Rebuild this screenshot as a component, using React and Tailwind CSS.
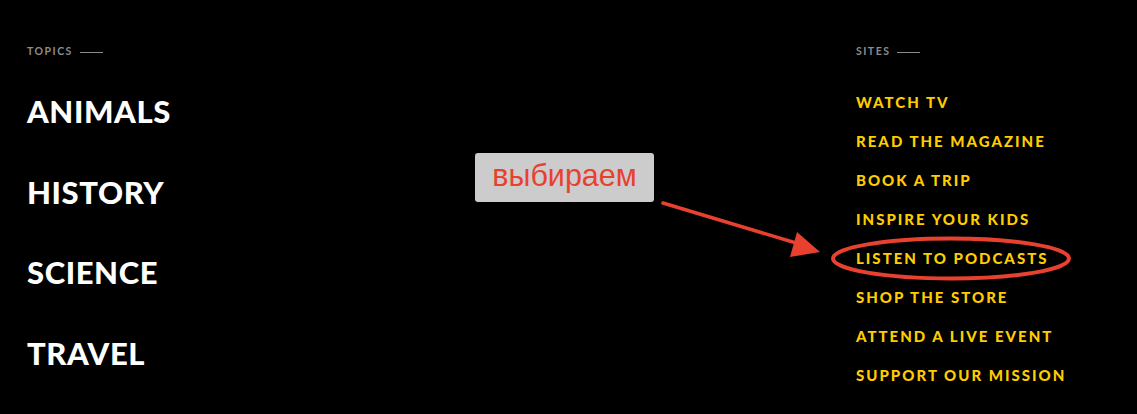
import React from "react";

const topics = ["Animals", "History", "Science", "Travel"];

const sites = [
  "Watch TV",
  "Read the Magazine",
  "Book a Trip",
  "Inspire Your Kids",
  "Listen to Podcasts",
  "Shop the Store",
  "Attend a Live Event",
  "Support Our Mission",
];

function SectionLabel({ children }) {
  return (
    <div className="flex items-center gap-[7px] h-[14px]">
      <span className="text-[10.5px] tracking-[1.5px] uppercase text-[#8c8c8c] font-bold">
        {children}
      </span>
      <span className="w-[23px] h-px bg-[#8c8c8c]" />
    </div>
  );
}

function Annotation() {
  return (
    <div className="absolute inset-0 pointer-events-none">
      <div className="absolute left-[475px] top-[153px] w-[179px] h-[49px] bg-[#cccccc] rounded-[3px] flex items-center justify-center">
        <span className="text-[30.5px] text-[#e8412f] font-['Liberation_Sans',Arial,sans-serif] leading-none -mt-[4px]">
          выбираем
        </span>
      </div>
      <svg className="absolute left-0 top-0" width="1137" height="414" viewBox="0 0 1137 414">
        <line x1="663" y1="203" x2="806" y2="246" stroke="#e8412f" strokeWidth="3.5" strokeLinecap="round" />
        <polygon points="820,252 797,232 790,257" fill="#e8412f" />
        <ellipse cx="951" cy="258.5" rx="118" ry="20" fill="none" stroke="#e8412f" strokeWidth="4" />
      </svg>
    </div>
  );
}

export default function App() {
  return (
    <div className="relative w-[1137px] h-[414px] bg-black overflow-hidden font-['Lato','Noto_Sans',sans-serif]">
      <div className="flex justify-between pl-[27px] pt-[45px]">
        <div>
          <SectionLabel>Topics</SectionLabel>
          <ul className="mt-[12px]">
            {topics.map((t) => (
              <li
                key={t}
                className="text-[31px] leading-[80.5px] font-black uppercase tracking-[0.6px] text-white"
              >
                {t}
              </li>
            ))}
          </ul>
        </div>
        <div className="w-[281px]">
          <SectionLabel>Sites</SectionLabel>
          <ul className="mt-[23.5px]">
            {sites.map((s) => (
              <li
                key={s}
                className="text-[15px] leading-[39px] font-black uppercase tracking-[2px] text-[#ffcc00]"
              >
                {s}
              </li>
            ))}
          </ul>
        </div>
      </div>
      <Annotation />
    </div>
  );
}
